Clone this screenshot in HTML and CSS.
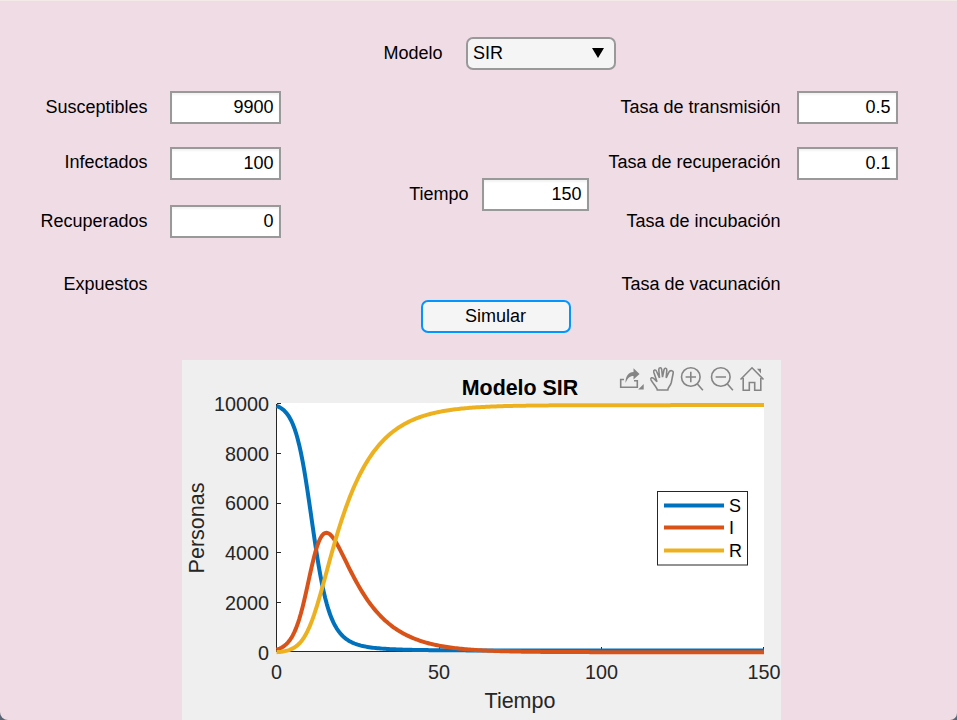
FILE: index.html
```html
<!DOCTYPE html>
<html lang="es">
<head>
<meta charset="utf-8">
<title>Modelo SIR</title>
<link rel="stylesheet" href="styles.css">
</head>
<body>
<main class="app">
  <div class="model-row">
    <span class="label">Modelo</span>
    <div class="select"><span>SIR</span><svg width="12" height="10" viewBox="0 0 12 10"><path d="M0 0H12L6 10Z"/></svg></div>
  </div>
  <div class="form">
    <section class="fields fields-left">
      <span class="label">Susceptibles</span><div class="field">9900</div>
      <span class="label raised">Infectados</span><div class="field">100</div>
      <span class="label">Recuperados</span><div class="field">0</div>
      <span class="label lowered">Expuestos</span>
    </section>
    <section class="middle">
      <div class="time-row"><span class="label">Tiempo</span><div class="field">150</div></div>
      <button class="simulate">Simular</button>
    </section>
    <section class="fields fields-right">
      <span class="label">Tasa de transmisión</span><div class="field">0.5</div>
      <span class="label raised">Tasa de recuperación</span><div class="field">0.1</div>
      <span class="label">Tasa de incubación</span><span></span>
      <span class="label lowered">Tasa de vacunación</span>
    </section>
  </div>
  <svg class="chart" width="599" height="360" viewBox="182 360 599 360">
    <rect class="plot" x="277" y="403" width="487" height="249"/>
    <path class="axis" d="M276.5 403.5V651.5H764M276.5 403.5H281M276.5 453.5H281M276.5 503.5H281M276.5 552.5H281M276.5 602.5H281M439.5 651V647M601.5 651V647M763.5 651V647"/>
    <g id="curves" class="curves"></g>
    <g class="ticks end">
      <text x="269" y="411">10000</text><text x="269" y="461">8000</text><text x="269" y="510">6000</text>
      <text x="269" y="560">4000</text><text x="269" y="610">2000</text><text x="269" y="660">0</text>
    </g>
    <g class="ticks mid">
      <text x="276.5" y="679">0</text><text x="439" y="679">50</text><text x="601.5" y="679">100</text><text x="764" y="679">150</text>
    </g>
    <g class="axis-name mid">
      <text x="520" y="708">Tiempo</text>
      <text transform="translate(204 528) rotate(-90)">Personas</text>
    </g>
    <text class="title mid" x="520" y="395">Modelo SIR</text>
    <g class="legend">
      <rect x="657.5" y="491.5" width="90" height="73.5"/>
      <path class="s" d="M664 505.5H724"/><path class="i" d="M664 527.5H724"/><path class="r" d="M664 550.5H724"/>
      <text x="729" y="512">S</text><text x="729" y="534">I</text><text x="729" y="557">R</text>
    </g>
    <g class="tools">
      <path d="M624 379.5H620.7V387.3H637.3V380.8H634"/>
      <path class="solid" d="M625.5 383C625.5 376 628.5 372.3 633.5 372V368.2L639.5 374L633.5 379.5V376C629.5 376 627.5 378.5 625.5 383ZM643.7 384V389.5H638.2Z"/>
      <path d="M657.3 390C657 387.2 652.8 383.5 651 379.8C650.2 377.8 652.2 377 653.7 378.5L657 381.7L653.8 372.2C653.2 369.8 655.7 369.2 656.5 371.3L659.5 377.8L658.8 369.8C658.8 367.2 661.3 367 661.7 369.5L662.5 377.2L664 369.8C664.6 367.5 667 368 666.8 370.3L666.2 377.8L669 372C670.2 369.8 673.8 370.5 673.2 373L671.3 382.5C670.5 386 667.8 387.5 667.8 390Z"/>
      <circle cx="690.8" cy="377" r="9.3"/><path d="M690.8 371.8V382.2M685.6 377H696M697.4 384L702.9 390.2"/>
      <circle cx="720.8" cy="377" r="9.3"/><path d="M715.6 377H726M727.4 384L732.9 390.2"/>
      <path d="M740.5 379.5L752 367.8L763.5 379.5M743.2 378V390.2H749.3V382.5H754.7V390.2H760.8V378"/>
      <path class="solid" d="M757 368.7H761V373.5Z"/>
    </g>
  </svg>
</main>
<script src="chart.js"></script>
</body>
</html>
```
FILE: styles.css
```css
body {
  margin: 0;
  background: #596572;
  color: #000;
  font: 18px/20px "Liberation Sans", sans-serif;
}
.app {
  box-sizing: border-box;
  height: 720px;
  overflow: hidden;
  border-top: 1px solid #f4ebe8;
  border-radius: 0 0 7px 8px;
  background: #f0dce5;
  display: flex;
  flex-direction: column;
}
.label { box-sizing: border-box; text-align: right; white-space: nowrap; }
.model-row {
  display: flex;
  align-items: center;
  gap: 24px;
  height: 33px;
  margin: 36px 0 21px;
}
.model-row .label { width: 442.5px; margin-right: -0.5px; padding-bottom: 2px; }
.select, .field, .simulate {
  box-sizing: border-box;
  height: 33px;
  border: 2px solid #999;
  background: #fff;
}
.select {
  width: 150px;
  display: flex;
  align-items: center;
  justify-content: space-between;
  padding: 0 10px 0 5px;
  border-radius: 7px;
  background: #f5f5f5;
}
.select span { padding-bottom: 2px; }
.select svg { margin-bottom: 2px; }
.field {
  padding: 5px 5.5px 0 0;
  line-height: 19px;
  text-align: right;
  box-shadow: inset 0 2px 2px #f3f3f3;
}
.form {
  display: grid;
  grid-template-columns: 281px 308px 1fr;
  height: 269px;
}
.fields {
  display: grid;
  align-content: start;
  align-items: start;
  grid-template-rows: 56px 58px 62px 33px;
}
.fields .label { padding-top: 6px; margin-right: -0.5px; }
.fields .raised { padding-top: 5px; }
.fields .lowered { padding-top: 7px; }
.fields-left { grid-template-columns: 147px 111px; column-gap: 23px; }
.fields-right { grid-template-columns: 191px 101px; column-gap: 17px; }
.middle { display: flex; flex-direction: column; padding-top: 87px; }
.time-row { display: flex; align-items: center; gap: 14px; }
.time-row .label { width: 187.5px; margin-right: -0.5px; padding-bottom: 2px; }
.time-row .field { width: 107px; }
.simulate {
  width: 150px;
  margin: 89px 0 0 140px;
  padding: 0 1px 2px 0;
  border-color: #0095ff;
  border-radius: 7px;
  background: #f5f5f5;
  color: #000;
  font: inherit;
}
.chart { flex: none; margin-left: 182px; background: #efefef; }
.plot { fill: #fff; }
.axis { fill: none; stroke: #262626; shape-rendering: crispEdges; }
.curves path, .legend path { fill: none; stroke-width: 4; stroke-linejoin: round; }
.chart .s { stroke: #0072bd; }
.chart .i { stroke: #d95319; }
.chart .r { stroke: #edb120; }
.ticks { font-size: 19.8px; fill: #262626; }
.axis-name { font-size: 21.5px; fill: #262626; }
.end { text-anchor: end; }
.mid { text-anchor: middle; }
.title { font-size: 21.4px; font-weight: bold; }
.legend rect { fill: #fff; stroke: #262626; }
.legend text { font-size: 18px; }
.tools { fill: none; stroke: #858585; stroke-width: 1.6; }
.tools .solid { fill: #858585; stroke: none; }
```
FILE: chart.js
```js
const beta = 0.5, gamma = 0.1, total = 10000, days = 150, step = 0.5;
const rate = ([s, i]) => {
  const infected = beta * s * i / total, recovered = gamma * i;
  return [-infected, infected - recovered, recovered];
};
const shift = (state, delta, h) => state.map((v, k) => v + delta[k] * h);

let state = [9900, 100, 0];
const paths = ['', '', ''];
for (let t = 0; t <= days; t += step) {
  state.forEach((v, k) => {
    const x = 276.5 + t * 487.5 / days, y = 652.2 - v * 248.8 / total;
    paths[k] += (t ? 'L' : 'M') + x.toFixed(2) + ' ' + y.toFixed(2);
  });
  const a = rate(state), b = rate(shift(state, a, step / 2));
  const c = rate(shift(state, b, step / 2)), d = rate(shift(state, c, step));
  state = state.map((v, k) => v + step * (a[k] + 2 * b[k] + 2 * c[k] + d[k]) / 6);
}
['s', 'i', 'r'].forEach((name, k) => {
  const path = document.createElementNS('http://www.w3.org/2000/svg', 'path');
  path.setAttribute('class', name);
  path.setAttribute('d', paths[k]);
  document.getElementById('curves').append(path);
});
```
